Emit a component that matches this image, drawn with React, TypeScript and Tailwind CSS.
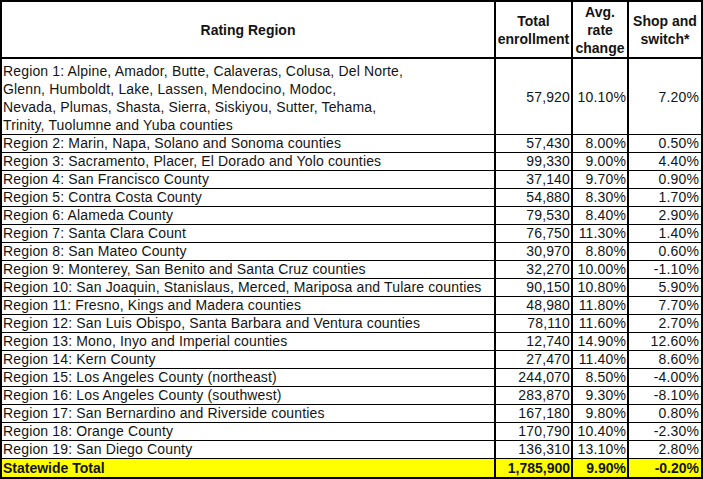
import React from "react";

type Row = { region: React.ReactNode; total: string; avg: string; shop: string };

const rows: Row[] = [
  { region: "Region 2: Marin, Napa, Solano and Sonoma counties", total: "57,430", avg: "8.00%", shop: "0.50%" },
  { region: "Region 3: Sacramento, Placer, El Dorado and Yolo counties", total: "99,330", avg: "9.00%", shop: "4.40%" },
  { region: "Region 4: San Francisco County", total: "37,140", avg: "9.70%", shop: "0.90%" },
  { region: "Region 5: Contra Costa County", total: "54,880", avg: "8.30%", shop: "1.70%" },
  { region: "Region 6: Alameda County", total: "79,530", avg: "8.40%", shop: "2.90%" },
  { region: "Region 7: Santa Clara Count", total: "76,750", avg: "11.30%", shop: "1.40%" },
  { region: "Region 8: San Mateo County", total: "30,970", avg: "8.80%", shop: "0.60%" },
  { region: "Region 9: Monterey, San Benito and Santa Cruz counties", total: "32,270", avg: "10.00%", shop: "-1.10%" },
  { region: "Region 10: San Joaquin, Stanislaus, Merced, Mariposa and Tulare counties", total: "90,150", avg: "10.80%", shop: "5.90%" },
  { region: "Region 11: Fresno, Kings and Madera counties", total: "48,980", avg: "11.80%", shop: "7.70%" },
  { region: "Region 12: San Luis Obispo, Santa Barbara and Ventura counties", total: "78,110", avg: "11.60%", shop: "2.70%" },
  { region: "Region 13: Mono, Inyo and Imperial counties", total: "12,740", avg: "14.90%", shop: "12.60%" },
  { region: "Region 14: Kern County", total: "27,470", avg: "11.40%", shop: "8.60%" },
  { region: "Region 15: Los Angeles County (northeast)", total: "244,070", avg: "8.50%", shop: "-4.00%" },
  { region: "Region 16: Los Angeles County (southwest)", total: "283,870", avg: "9.30%", shop: "-8.10%" },
  { region: "Region 17: San Bernardino and Riverside counties", total: "167,180", avg: "9.80%", shop: "0.80%" },
  { region: "Region 18: Orange County", total: "170,790", avg: "10.40%", shop: "-2.30%" },
  { region: "Region 19: San Diego County", total: "136,310", avg: "13.10%", shop: "2.80%" },
];

const grid = "grid grid-cols-[492px_77px_56px_74px]";

export default function App() {
  return (
    <div
      className="w-[703px] h-[479px] bg-white text-[#141414] text-[14px] tracking-[0.15px] border-2 border-black"
      style={{ fontFamily: '"Liberation Sans", Arial, Helvetica, sans-serif' }}
    >
      {/* Header */}
      <div className={`${grid} h-[57px] border-b-2 border-black font-bold leading-[18px] text-center tracking-normal`}>
        <div className="flex items-center justify-center">Rating Region</div>
        <div className="flex items-center justify-center border-l-2 border-black">
          Total
          <br />
          enrollment
        </div>
        <div className="flex items-center justify-center border-l-2 border-black">
          <span>
            Avg.
            <br />
            rate
            <br />
            change
          </span>
        </div>
        <div className="flex items-center justify-center border-l-2 border-black">
          <span>
            Shop and
            <br />
            switch*
          </span>
        </div>
      </div>

      {/* Region 1 */}
      <div className={`${grid} h-[76px] border-b border-black leading-[18px]`}>
        <div className="pl-[1px] pt-[3px] whitespace-nowrap">
          Region 1: Alpine, Amador, Butte, Calaveras, Colusa, Del Norte,
          <br />
          Glenn, Humboldt, Lake, Lassen, Mendocino, Modoc,
          <br />
          Nevada, Plumas, Shasta, Sierra, Siskiyou, Sutter, Tehama,
          <br />
          Trinity, Tuolumne and Yuba counties
        </div>
        <div className="flex items-center justify-end pr-[1px] border-l-2 border-black">57,920</div>
        <div className="flex items-center justify-end pr-[1px] border-l-2 border-black">10.10%</div>
        <div className="flex items-center justify-end pr-[2px] border-l-2 border-black">7.20%</div>
      </div>

      {rows.map((r, i) => (
        <div key={i} className={`${grid} h-[18px] border-b border-black leading-[17px]`}>
          <div className="flex items-center pl-[1px] whitespace-nowrap">{r.region}</div>
          <div className="flex items-center justify-end pr-[1px] border-l-2 border-black">{r.total}</div>
          <div className="flex items-center justify-end pr-[1px] border-l-2 border-black">{r.avg}</div>
          <div className="flex items-center justify-end pr-[2px] border-l-2 border-black">{r.shop}</div>
        </div>
      ))}

      {/* Statewide total */}
      <div className={`${grid} h-[18px] leading-[17px] bg-[#ffff00] font-bold tracking-normal`}>
        <div className="flex items-center pl-[1px]">Statewide Total</div>
        <div className="flex items-center justify-end pr-[1px] border-l-2 border-black">1,785,900</div>
        <div className="flex items-center justify-end pr-[1px] border-l-2 border-black">9.90%</div>
        <div className="flex items-center justify-end pr-[2px] border-l-2 border-black">-0.20%</div>
      </div>
    </div>
  );
}
